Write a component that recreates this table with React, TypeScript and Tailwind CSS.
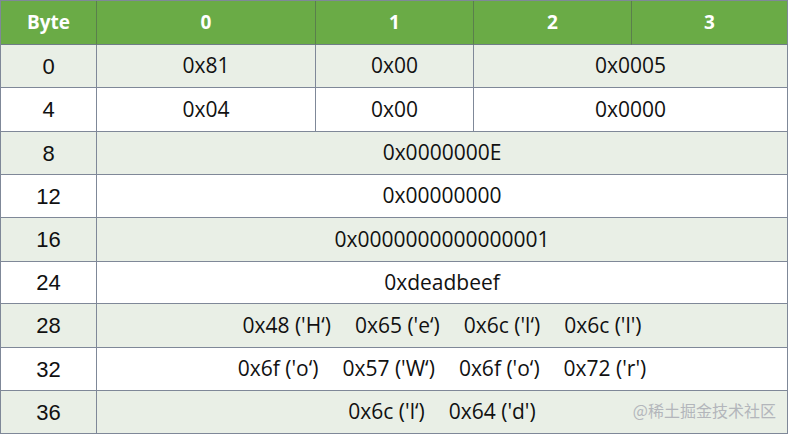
import React from "react";

type Cell = { text: string | string[]; span: number };
type Row = { label: string; cells: Cell[]; light: boolean; h: string };

const Q = "\u2018";

const rows: Row[] = [
  { label: "0", light: true, h: "h-[43px]", cells: [{ text: "0x81", span: 1 }, { text: "0x00", span: 1 }, { text: "0x0005", span: 2 }] },
  { label: "4", light: false, h: "h-[44px]", cells: [{ text: "0x04", span: 1 }, { text: "0x00", span: 1 }, { text: "0x0000", span: 2 }] },
  { label: "8", light: true, h: "h-[43px]", cells: [{ text: "0x0000000E", span: 4 }] },
  { label: "12", light: false, h: "h-[43px]", cells: [{ text: "0x00000000", span: 4 }] },
  { label: "16", light: true, h: "h-[44px]", cells: [{ text: "0x0000000000000001", span: 4 }] },
  { label: "24", light: false, h: "h-[42px]", cells: [{ text: "0xdeadbeef", span: 4 }] },
  {
    label: "28", light: true, h: "h-[44px]",
    cells: [{ text: ["0x48 ('H" + Q + ")", "0x65 ('e" + Q + ")", "0x6c ('l" + Q + ")", "0x6c ('l')"], span: 4 }],
  },
  {
    label: "32", light: false, h: "h-[43px]",
    cells: [{ text: ["0x6f ('o" + Q + ")", "0x57 ('W" + Q + ")", "0x6f ('o" + Q + ")", "0x72 ('r')"], span: 4 }],
  },
  {
    label: "36", light: true, h: "h-[43px]",
    cells: [{ text: ["0x6c ('l" + Q + ")", "0x64 ('d')"], span: 4 }],
  },
];

function spanClass(n: number) {
  if (n === 1) return "col-span-1";
  if (n === 2) return "col-span-2";
  return "col-span-4";
}

export default function App() {
  return (
    <div className="relative w-[790px] h-[444px] bg-white">
      <div className="w-[788px] border-l border-t border-[#7f8898] grid grid-cols-[96px_219px_158px_158px_156px]">
        {["Byte", "0", "1", "2", "3"].map((t, i) => (
          <div
            key={i}
            className={`h-[44px] bg-[#6aab46] border-b border-b-[#6f7d86] border-r ${i === 4 ? "border-r-[#7f8898]" : "border-r-[#5a7f4c]"} flex items-center justify-center text-white font-bold text-[19px] font-['Open_Sans','Liberation_Sans',sans-serif]`}
          >
            {t}
          </div>
        ))}
        {rows.map((r, ri) => (
          <React.Fragment key={ri}>
            <div
              className={`${r.h} ${r.light ? "bg-[#e9efe6]" : "bg-white"} border-b border-r border-[#7f8898] flex items-center justify-center text-[22px] text-[#111] font-['Liberation_Sans',Arial,sans-serif]`}
            >
              {r.label}
            </div>
            {r.cells.map((c, ci) => (
              <div
                key={ci}
                className={`${r.h} ${spanClass(c.span)} ${r.light ? "bg-[#e9efe6]" : "bg-white"} border-b border-r border-[#7f8898] flex items-center justify-center gap-[24px] text-[21px] text-[#111] font-['Open_Sans','Liberation_Sans',sans-serif]`}
              >
                {Array.isArray(c.text) ? c.text.map((s, k) => <span key={k}>{s}</span>) : c.text}
              </div>
            ))}
          </React.Fragment>
        ))}
      </div>
      <div className="absolute right-[14px] bottom-[22px] text-[16px] text-[#b3b6bb] font-['Noto_Sans_CJK_SC','Noto_Sans',sans-serif]">
        @稀土掘金技术社区
      </div>
    </div>
  );
}
